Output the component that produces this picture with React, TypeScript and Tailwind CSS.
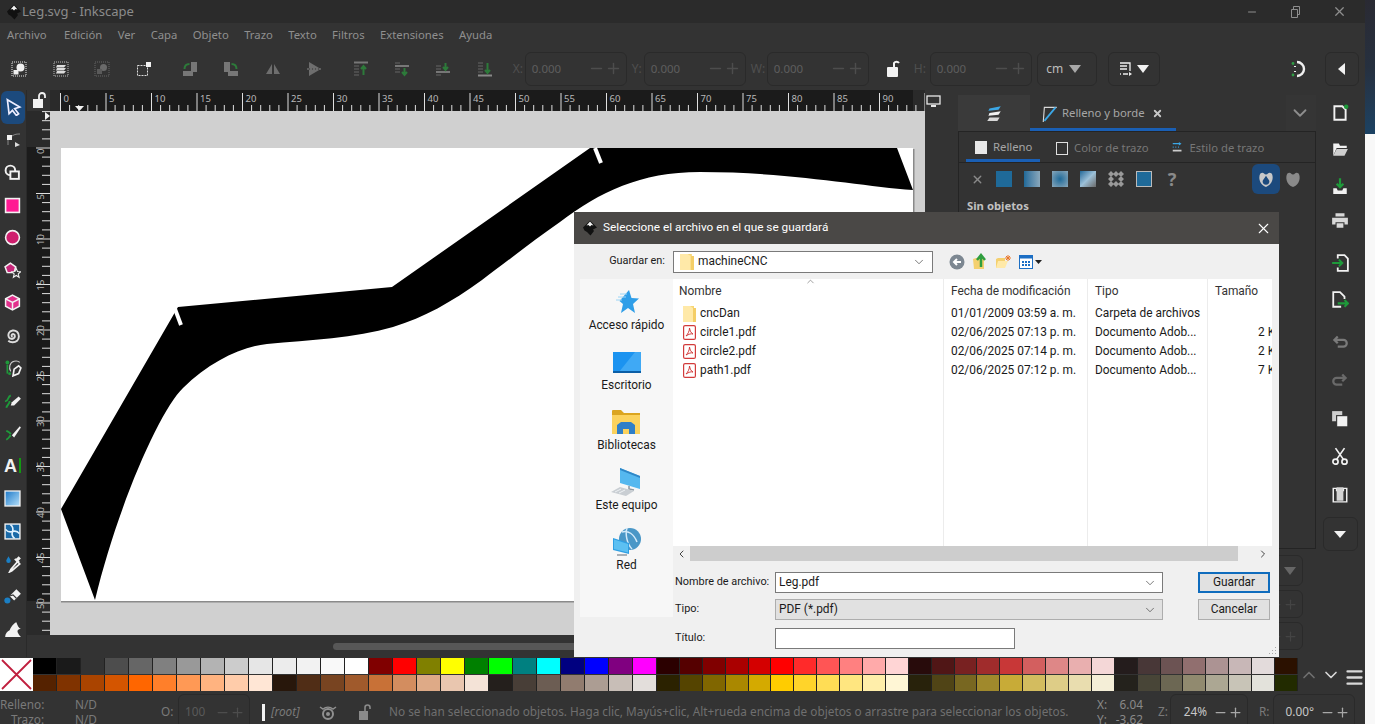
import React from "react"
import { ChevronDown, ChevronUp, ChevronLeft, ChevronRight, Minus, Plus, X, Menu } from "lucide-react"

const row1 = ["#000000","#1a1a1a","#333333","#4d4d4d","#666666","#808080","#999999","#b3b3b3","#cccccc","#e6e6e6","#ececec","#f2f2f2","#f9f9f9","#ffffff","#800000","#ff0000","#808000","#ffff00","#008000","#00ff00","#008080","#00ffff","#000080","#0000ff","#800080","#ff00ff","#2b0000","#550000","#800000","#aa0000","#d40000","#ff0000","#ff2a2a","#ff5555","#ff8080","#ffaaaa","#ffd5d5","#280b0b","#501616","#782121","#a02c2c","#c83737","#d35f5f","#de8787","#e9afaf","#f4d7d7","#241c1c","#483737","#6c5353","#916f6f","#ac9393","#c8b7b7","#e3dbdb","#2b1100"]
const row2 = ["#552200","#803300","#aa4400","#d45500","#ff6600","#ff7f2a","#ff9955","#ffb380","#ffccaa","#ffe6d5","#28170b","#502d16","#784421","#a05a2c","#c87137","#d38d5f","#deaa87","#e9c6af","#f4e3d7","#241f1c","#483e37","#6c5d53","#917c6f","#ac9d93","#c8beb7","#e3dedb","#2b2200","#554400","#806600","#aa8800","#d4aa00","#ffcc00","#ffd42a","#ffdd55","#ffe680","#ffeeaa","#fff6d5","#28220b","#504416","#786721","#a0892c","#c8ab37","#d3bc5f","#decd87","#e9ddaf","#f4eed7","#24221c","#484537","#6c6753","#918a6f","#aca793","#c8c4b7","#e3e2db","#222b00"]

const ui = "font-['Noto_Sans',sans-serif]"
const win = "font-['Roboto',sans-serif]"

function I({ s = 16, children }: { s?: number; children: React.ReactNode }) {
  return <svg width={s} height={s} viewBox="0 0 16 16" className="shrink-0">{children}</svg>
}

function Spin({ w, value }: { w: string; value: string }) {
  return (
    <div className={`flex h-[34px] shrink-0 items-center rounded-md border border-[#2a2a2a] ${w}`}>
      <span className="flex-1 pl-1.5 text-[11.500px] text-[#5e5e5e]">{value}</span>
      <Minus size={17} className="text-[#4d4d4d]" />
      <Plus size={17} className="mr-1 text-[#4d4d4d]" />
    </div>
  )
}

function Logo({ s = 16 }: { s?: number }) {
  return (
    <I s={s}>
      <path d="M8 0.5 15 7.500 11 9.500 12 11 8.500 15.500 5 12 2.500 10.500 1 7.500Z" fill="#111" />
      <path d="M8 1.500 11.500 5.500 9.500 5 8 6.500 6.500 5 4.500 5.500Z" fill="#f2f2f2" />
    </I>
  )
}

function TitleBar() {
  return (
    <div className="flex h-[23px] items-center bg-[#2b2b2b]">
      <div className="ml-[6px]"><Logo /></div>
      <span className="text-[13px] text-[#8b8b8b]">Leg.svg - Inkscape</span>
      <div className="ml-auto flex items-center text-[#8e8e8e]">
        <Minus size={12} className="mr-[32px]" />
        <svg width="11" height="12" viewBox="0 0 11 12" className="mr-[31px]" fill="none" stroke="currentColor">
          <path d="M1.500 3.500h6v8h-6zM3.500 3.500v-3h6v8h-2" />
        </svg>
        <X size={15} className="mr-[18px]" />
      </div>
    </div>
  )
}

function MenuBar() {
  const items = ["Archivo", "Edición", "Ver", "Capa", "Objeto", "Trazo", "Texto", "Filtros", "Extensiones", "Ayuda"]
  return (
    <div className="flex h-[24px] items-center gap-[15.400px] bg-[#333333] pl-[7px] pt-[1px] text-[11.300px] text-[#8f8f8f]">
      {items.map((t, i) => <span key={t} className={i === 0 ? "mr-[2px]" : ""}>{t}</span>)}
    </div>
  )
}

function TopIcons() {
  const dotted = "#e8e8e8"
  return (
    <>
      <div className="flex w-[173px] shrink-0 items-center gap-[25.500px] pl-[11px]">
        <I><rect x="1" y="1" width="14" height="14" fill="none" stroke={dotted} strokeDasharray="1 1" /><circle cx="9.500" cy="6.500" r="4" fill="#f0f0f0" /><rect x="2.500" y="9" width="5" height="4.500" fill="#f0f0f0" /></I>
        <I><rect x="1" y="1" width="14" height="14" fill="none" stroke="#bbb" strokeDasharray="1 1" /><path d="M4 4h9l-2 2.500H3zM4 7h9l-2 2.500H3zM4 10h9l-2 2.500H3z" fill="#ddd" /></I>
        <I><rect x="1" y="1" width="14" height="14" fill="none" stroke="#666" strokeDasharray="1 1" /><circle cx="9.500" cy="6.500" r="3.500" fill="#6a6a6a" /><rect x="3" y="8" width="5" height="5" fill="#5a5a5a" /></I>
        <I><rect x="1.500" y="4.500" width="10" height="10" fill="none" stroke="#ddd" strokeDasharray="2 1" /><rect x="10" y="1" width="5" height="5" fill="#f2f2f2" /></I>
      </div>
      <div className="flex shrink-0 items-center gap-[25.300px] pl-[9px]">
        <I><rect x="9" y="1" width="6" height="10" fill="#777" /><rect x="1" y="10" width="10" height="5" fill="#777" /><path d="M2.500 8c0-3 2-5 5-5" fill="none" stroke="#2d7a3a" strokeWidth="2" /></I>
        <I><rect x="1" y="1" width="6" height="10" fill="#777" /><rect x="5" y="10" width="10" height="5" fill="#777" /><path d="M13.500 8c0-3-2-5-5-5" fill="none" stroke="#2d7a3a" strokeWidth="2" /></I>
        <I><path d="M1 13 7 3v10zM15 13 9 3v10z" fill="#6e6e6e" /></I>
        <I><path d="M3 1v6.500h11zM3 15V8.500h11z" fill="#6e6e6e" /><path d="M1 8h14" stroke="#888" strokeDasharray="2 1" /></I>
      </div>
      <div className="flex shrink-0 items-center gap-[25.300px] pl-[31px]">
        <I><path d="M1 1.500h14" stroke="#777" strokeWidth="2" /><path d="M1 5h5M1 8h5M1 11h5M1 14h5" stroke="#666" /><path d="M10.500 14V5M8 8l2.500-3L13 8" stroke="#2d7a3a" fill="none" strokeWidth="2" /></I>
        <I><path d="M1 5h14" stroke="#777" strokeWidth="2" /><path d="M1 2h5M1 8h5M1 11h5" stroke="#666" /><path d="M10.500 14V7M8 11l2.500 3 2.500-3" stroke="#2d7a3a" fill="none" strokeWidth="2" /></I>
        <I><path d="M1 11h14" stroke="#777" strokeWidth="2" /><path d="M1 5h5M1 8h5M1 14h5" stroke="#666" /><path d="M10.500 2v7M8 6l2.500 3L13 6" stroke="#2d7a3a" fill="none" strokeWidth="2" /></I>
        <I><path d="M1 14.500h14" stroke="#888" strokeWidth="2" /><path d="M1 2h5M1 5h5M1 8h5M1 11h5" stroke="#666" /><path d="M10.500 2v10M8 9l2.500 3L13 9" stroke="#2d7a3a" fill="none" strokeWidth="2" /></I>
      </div>
    </>
  )
}

function ToolBar() {
  return (
    <div className="flex h-[43px] items-center bg-[#333333] text-xs">
      <TopIcons />
      <span className="ml-[20px] w-[12px] shrink-0 text-[#4f4f4f]">X:</span>
      <Spin w="w-[102px]" value="0.000" />
      <span className="ml-[5px] w-[12px] shrink-0 text-[#4f4f4f]">Y:</span>
      <Spin w="w-[102px]" value="0.000" />
      <span className="ml-[5px] w-[16px] shrink-0 text-[#4f4f4f]">W:</span>
      <Spin w="w-[102px]" value="0.000" />
      <svg width="14" height="20" viewBox="0 0 14 20" className="ml-[17px] shrink-0">
        <rect x="1" y="8" width="11" height="10" rx="1" fill="#f2f2f2" />
        <path d="M8 8V4a3 3 0 0 1 5 0" fill="none" stroke="#f2f2f2" strokeWidth="2" />
      </svg>
      <span className="ml-[14px] w-[16px] shrink-0 text-[#4f4f4f]">H:</span>
      <Spin w="w-[102px]" value="0.000" />
      <div className="ml-[5px] flex h-[34px] w-[60px] shrink-0 items-center justify-center gap-[6px] rounded-md border border-[#2a2a2a] pr-[6px] text-[#bdbdbd]">
        cm
        <svg width="12" height="8" viewBox="0 0 12 8"><path d="M0 0h12L6 8z" fill="#a8a8a8" /></svg>
      </div>
      <div className="ml-[11px] flex h-[34px] w-[52px] shrink-0 items-center justify-center gap-[3px] rounded-md border border-[#2a2a2a]">
        <I><path d="M2 2h10v8M2 5h7M2 8h7" stroke="#eee" fill="none" strokeWidth="1.300" /><path d="M2 13h1M5 13h5" stroke="#eee" strokeWidth="1.300" /><path d="m11 11 3 2-3 2z" fill="#eee" /></I>
        <svg width="12" height="8" viewBox="0 0 12 8"><path d="M0 0h12L6 8z" fill="#f2f2f2" /></svg>
      </div>
      <svg width="18" height="18" viewBox="0 0 18 18" className="ml-[129px] shrink-0">
        <path d="M8 2a7 7 0 1 1 0 14" fill="none" stroke="#f0f0f0" strokeWidth="2.400" />
        <path d="M6 6v1M6 11v1" stroke="#f0f0f0" strokeWidth="2" />
        <circle cx="4" cy="3.500" r="1.400" fill="#2f9e44" /><circle cx="4" cy="15" r="1.400" fill="#2f9e44" />
      </svg>
      <div className="ml-[18px] flex h-[34px] w-[34px] shrink-0 items-center justify-center rounded-md border border-[#2a2a2a]">
        <svg width="7" height="12" viewBox="0 0 7 12"><path d="M7 0v12L0 6z" fill="#f2f2f2" /></svg>
      </div>
    </div>
  )
}

const white = "#f2f2f2"
const tools: React.ReactNode[] = [
  <I s={18} key="sel"><path d="M3 1.500 14 8l-4.500 1.500L13 14l-2 1.500-3.500-4.500L4.500 14z" fill="#1c4a7d" stroke="#eef" strokeWidth="1.500" /></I>,
  <I s={16} key="node"><rect x="2" y="3" width="5" height="5" fill={white} /><path d="M7 4c3-2 5-2 8-2" stroke="#888" fill="none" /><path d="M3 8v5" stroke="#888" /><path d="m10 10 5 3-5 2z" fill="#ddd" /></I>,
  <I s={17} key="build"><circle cx="6" cy="6" r="4.500" fill="none" stroke={white} strokeWidth="1.800" /><rect x="6" y="7" width="8" height="7" fill="#333" stroke={white} strokeWidth="1.800" /></I>,
  <I s={17} key="rect"><rect x="1.500" y="1.500" width="13" height="13" fill="#ff1a93" stroke={white} strokeWidth="1.500" /></I>,
  <I s={17} key="circ"><circle cx="8" cy="8" r="6.500" fill="#cf1f6e" stroke={white} strokeWidth="1.500" /></I>,
  <I s={17} key="star"><path d="M6 1 11 4.500 9.500 10H3L1 4.500z" fill="#c7277a" stroke={white} strokeWidth="1.400" /><path d="m11.500 6 1.200 3 3 .2-2.300 2 .8 3.200-2.700-1.700-2.700 1.700.8-3.200-2.300-2 3-.2z" fill="#333" stroke={white} /></I>,
  <I s={17} key="box"><path d="M8 1 14.500 4.500v7L8 15l-6.500-3.500v-7z" fill="#e2308c" stroke={white} strokeWidth="1.400" /><path d="M1.500 4.500 8 8l6.500-3.500M8 8v7" fill="none" stroke={white} strokeWidth="1.400" /></I>,
  <I s={17} key="spiral"><path d="M8 9.500a1.500 1.500 0 1 1 2-2c.8 2-1 4-3 3.700C4.500 11 3.500 8 4.500 5.800 6 3 10 2.500 12.300 4.500c2.500 2.300 2 6.500 0 8.500-2 1.700-6 2-8.300 0" fill="none" stroke="#dcdcdc" strokeWidth="1.800" /></I>,
  <I s={18} key="pen"><path d="M6 11c-2-3-1-8 3-9 2-.5 4 0 5 1" fill="none" stroke="#ccc" /><path d="m8 15 1-6 4-3 2 2-2 5z" fill="#333" stroke={white} strokeWidth="1.500" /><circle cx="3" cy="3" r="1.700" fill="#1e9a3a" /><path d="M3 5v8" stroke="#1e9a3a" strokeWidth="1.500" /><circle cx="5" cy="13" r="1.300" fill="#1e9a3a" /></I>,
  <I s={18} key="pencil"><path d="m6 12 1-3 6-5 2 2-6 6z" fill={white} /><path d="M1 8c3 1 2-4 5-5M2 14c1-3 3-3 3-6" stroke="#1e9a3a" fill="none" strokeWidth="1.700" /></I>,
  <I s={18} key="cal"><path d="m7 10 7-8 1 1-6 9z" fill={white} /><path d="M2 6c2 1 3 1 4 3M2 14c2-1 3-3 4-4" stroke="#1e9a3a" fill="none" strokeWidth="1.700" /></I>,
  <div key="text" className="flex items-center gap-[2px]"><span className="font-['Liberation_Sans',sans-serif] text-[18px] font-bold leading-none text-[#f2f2f2]">A</span><div className="h-[15px] w-[2px] bg-[#119911]" /></div>,
  <svg key="grad" width="17" height="17" viewBox="0 0 17 17"><defs><linearGradient id="g1" x1="0" y1="0" x2="1" y2="1"><stop offset="0" stopColor="#1c78c8" /><stop offset="1" stopColor="#b8e2fb" /></linearGradient></defs><rect x="1" y="1" width="15" height="15" fill="url(#g1)" stroke={white} strokeWidth="1.300" /></svg>,
  <I s={17} key="mesh"><rect x="1" y="1" width="14" height="14" fill="#1a6aa8" stroke={white} strokeWidth="1.300" /><path d="M8 8C5 9 3 8 1.500 6M8 8c1-3 0-5-2-6.500M8 8c3-1 5 0 6.500 2M8 8c-1 3 0 5 2 6.500" stroke="#e0f2ff" fill="none" strokeWidth="1.500" /></I>,
  <I s={18} key="drop"><path d="m6 13 6-7 2 2-7 6-2 1z" fill="#333" stroke={white} strokeWidth="1.500" /><path d="m11 3 2-2 2 2-2 2 1 1-1.500 1.500L9 4l1-1z" fill={white} /><path d="M4 1c1 2 2 3 2 4a2 2 0 0 1-4 0c0-1 1-2 2-4z" fill="#1b7fc4" /></I>,
  <I s={18} key="bucket"><path d="m5 8 6-6 4 4-6 6z" fill={white} /><circle cx="3" cy="12" r="2.700" fill="#1b7fc4" /><path d="m5 8 3-1 3 3" fill="none" stroke="#333" /></I>,
  <I s={18} key="eraser"><path d="M1 15c0-3 2-5 4-6 1-2 3-6 6-7 1 3 2 5 4 6 0 0-3 0-3 2s3 5 3 5z" fill={white} /></I>,
]

function ToolColumn() {
  return (
    <div className="flex w-[27px] shrink-0 flex-col items-center border-r border-[#2a2a2a] bg-[#333333] pr-[1px] pt-[1px]">
      {tools.map((t, i) => (
        <div key={i} className={`flex h-[32.600px] w-[24px] shrink-0 items-center justify-center ${i === 0 ? "rounded-md bg-[#1c4a7d]" : ""}`}>{t}</div>
      ))}
    </div>
  )
}

function TopRuler() {
  const ticks = []
  for (let i = 0; i <= 95; i++) {
    const x = 10.500 + i * 9.100
    ticks.push(<line key={i} x1={x} x2={x} y1={i % 5 === 0 ? 3 : 15} y2={21} stroke="#e0e0e0" strokeWidth="1" />)
    if (i % 5 === 0 && i < 95) ticks.push(<text key={`t${i}`} x={x + 3} y={12} fontSize="9.500" fill="#b8b8b8" fontFamily="Noto Sans">{i}</text>)
  }
  return (
    <svg width="875" height="21" viewBox="0 0 875 21" className="shrink-0 bg-[#2a2a2a]">
      <rect x="10" y="0" width="853" height="21" fill="#1b1b1b" />
      {ticks}
      <path d="M25 16h9l-4.500 5z" fill="#f2f2f2" />
    </svg>
  )
}

function LeftRuler() {
  const ticks = []
  for (let i = -4; i <= 54; i++) {
    const y = 37 + i * 9.100
    ticks.push(<line key={i} y1={y} y2={y} x1={i % 5 === 0 ? 9 : 15} x2={23} stroke="#e0e0e0" strokeWidth="1" />)
    if (i % 5 === 0 && i >= 0 && i <= 50) ticks.push(<text key={`t${i}`} transform={`translate(17 ${y + 6}) rotate(-90)`} fontSize="9.500" fill="#b8b8b8" fontFamily="Noto Sans">{i}</text>)
  }
  return (
    <svg width="23" height="524" viewBox="0 0 23 524" className="shrink-0 bg-[#2a2a2a]">
      <rect x="0" y="36" width="23" height="454" fill="#1b1b1b" />
      {ticks}
      <path d="M18 1v8l5-4z" fill="#f2f2f2" />
    </svg>
  )
}

function Drawing() {
  return (
    <svg width="875" height="524" viewBox="50 111 875 524" className="shrink-0 bg-[#d0d0d0]">
      <rect x="61" y="149" width="853.500" height="453.500" fill="#8a8a8a" />
      <rect x="61" y="148" width="852" height="453" fill="#fff" />
      <path d="M61 509 178 307 392 287 590 148H897L913 190C860 186 790 172 700 172 640 172 600 192 560 222 530 243 505 263 482 280 450 303 425 317 393 327 355 338 310 340 267 344 240 347 210 362 183 388 160 410 118 505 95 600Z" fill="#000" />
      <path d="M175 309 181 325" stroke="#fff" strokeWidth="4" />
      <path d="M595 148 601 163" stroke="#fff" strokeWidth="4" />
    </svg>
  )
}

function Center() {
  return (
    <div className="flex w-[918px] shrink-0 flex-col bg-[#333333]">
      <div className="flex h-[21px] shrink-0">
        <div className="flex w-[23px] items-center justify-start bg-[#333333]">
          <svg width="14" height="17" viewBox="0 0 14 17" className="ml-[6px]"><rect x="0" y="7" width="10" height="9" fill="#f2f2f2" /><path d="M6 7V4a3 3 0 0 1 6 0v2" fill="none" stroke="#f2f2f2" strokeWidth="1.800" /></svg>
        </div>
        <TopRuler />
        <div className="flex flex-1 justify-start pl-[1px] pt-[5px]">
          <svg width="15" height="13" viewBox="0 0 15 13"><rect x="1" y="1" width="13" height="8" fill="none" stroke="#e8e8e8" strokeWidth="1.300" /><path d="M5 11h5" stroke="#e8e8e8" strokeWidth="2" /></svg>
        </div>
      </div>
      <div className="flex h-[524px] shrink-0">
        <LeftRuler />
        <Drawing />
      </div>
      <div className="flex flex-1 items-center pl-[306px]">
        <div className="h-[7px] w-[300px] rounded-full bg-[#575757]" />
      </div>
    </div>
  )
}

function Panel() {
  return (
    <div className="flex w-[371px] shrink-0 flex-col bg-[#333333] pl-[13px] pt-[5px]">
      <div className="flex h-[36px] w-[358px] shrink-0 items-stretch bg-[#333333]">
        <div className="flex w-[72px] items-center justify-center bg-[#3a3a3a]">
          <I s={18}><path d="M4 4 14 2l-2 3-9 1z" fill="#3ba7e6" /><path d="M4 8 14 6.500l-2 3-9 1z" fill="#f2f2f2" /><path d="M4 12h9l-2 3H2z" fill="#d8d8d8" /></I>
        </div>
        <div className="flex w-[146px] items-center border-b-[3px] border-[#1a5fb4] pl-[11px] pt-[3px] text-[11.300px] text-[#a6a6a6]">
          <I s={18}><path d="M2 16 3 3h11" fill="none" stroke="#d8d8d8" /><path d="M3 15 13 3" stroke="#3ba7e6" strokeWidth="1.600" /></I>
          <span className="ml-[3px]">Relleno y borde</span>
          <X size={11} strokeWidth={4} className="ml-[7px] text-[#c8c8c8]" />
        </div>
        <div className="ml-auto flex w-[30px] items-center justify-center bg-[#353535] pr-[3px]"><ChevronDown size={22} className="text-[#8d8d8d]" /></div>
      </div>
      <div className="flex h-[418px] w-[358px] shrink-0 flex-col border border-[#242424] bg-[#333333]">
        <div className="flex h-[31px] shrink-0 items-end border-b border-[#242424] text-[11.300px] text-[#777777]">
          <div className="ml-[7px] flex h-[31px] w-[74px] items-center border-b-[3px] border-[#1a5fb4] pl-[9px] pt-[4px] text-[#a6a6a6]">
            <div className="mr-[6px] h-[13px] w-[12px] bg-[#e8e8e8]" />Relleno
          </div>
          <div className="ml-[16px] flex h-[31px] items-center pt-[3px]">
            <div className="mr-[6px] h-[13px] w-[12px] border border-[#e0e0e0]" />Color de trazo
          </div>
          <div className="ml-[22px] flex h-[31px] items-center pt-[3px]">
            <I s={14}><path d="M2 3h8M2 7h1M5 7h1M8 7h1" stroke="#3ba7e6" strokeWidth="1.500" /><path d="m9 1 3 2-3 2z" fill="#3ba7e6" /><path d="M2 11h10" stroke="#ccc" strokeWidth="2" /></I>
            <span className="ml-[5px]">Estilo de trazo</span>
          </div>
        </div>
        <div className="flex h-[32px] shrink-0 items-center pl-[12px]">
          <X size={13} strokeWidth={2.500} className="text-[#8a8a8a]" />
          <div className="ml-[12px] h-[16px] w-[16px] bg-[#1f6a99]" />
          <div className="ml-[12px] h-[16px] w-[16px] bg-gradient-to-r from-[#1f6a99] to-[#8aa8bb]" />
          <div className="ml-[12px] h-[16px] w-[16px] bg-[radial-gradient(circle,#1f6a99,#8aa8bb)]" />
          <div className="ml-[12px] h-[16px] w-[16px] bg-gradient-to-br from-[#1f6a99] via-[#9cc0d8] to-[#6a6a6a]" />
          <svg width="16" height="16" viewBox="0 0 16 16" className="ml-[12px]"><path d="M3 0l3 3-3 3-3-3zM8 0l3 3-3 3-3-3zM13 0l3 3-3 3-3-3zM3 5l3 3-3 3-3-3zM13 5l3 3-3 3-3-3zM3 10l3 3-3 3-3-3zM8 10l3 3-3 3-3-3zM13 10l3 3-3 3-3-3z" fill="#999" /></svg>
          <div className="ml-[12px] h-[16px] w-[16px] border border-[#bbb] bg-[#1f6a99]" />
          <span className="ml-[12px] w-[16px] text-center text-lg font-bold leading-none text-[#8a8a8a]">?</span>
          <div className="ml-[72px] flex h-[30px] w-[28px] items-center justify-center rounded-md bg-[#1c4a7d]">
            <I s={18}><path d="M3 3c3-1.500 3 1 5 1s2-2.500 5-1c2 3 1 10-5 12C2 13 1 6 3 3z" fill="#c8c8c8" /><path d="M8 5c2 3 3 4 3 5a3 3 0 0 1-6 0c0-1 1-2 3-5z" fill="#1c4a7d" /></I>
          </div>
          <div className="ml-[4px]"><I s={18}><path d="M3 3c3-1.500 3 1 5 1s2-2.500 5-1c2 3 1 10-5 12C2 13 1 6 3 3z" fill="#8a8a8a" /></I></div>
        </div>
        <div className="pl-[8px] pt-[3px] text-[11.300px] font-bold text-[#c0c0c0]">Sin objetos</div>
      </div>
      <div className="flex flex-1 flex-col items-end gap-[4px] pr-[13px] pt-[6px]">
        <div className="flex h-[31px] w-[50px] items-center justify-end rounded-md border border-[#2a2a2a] pr-[6px]">
          <svg width="12" height="8" viewBox="0 0 12 8"><path d="M0 0h12L6 8z" fill="#666" /></svg>
        </div>
        <div className="flex h-[28px] w-[50px] items-center justify-end rounded-md border border-[#2a2a2a]">
          <Minus size={15} className="text-[#444]" /><Plus size={15} className="mr-1 text-[#444]" />
        </div>
        <div className="flex h-[28px] w-[50px] items-center justify-end rounded-md border border-[#2a2a2a]">
          <Minus size={15} className="text-[#444]" /><Plus size={15} className="mr-1 text-[#444]" />
        </div>
      </div>
    </div>
  )
}

// icon and the gap above it, gaps read off the reference
const sideIcons: [React.ReactNode, string][] = [
  [<I s={18} key="n"><path d="M3 2h7l3 3v9H3z" fill="none" stroke={white} strokeWidth="1.700" /><circle cx="13.500" cy="2.500" r="2" fill="#1e9a3a" /></I>, "mt-[13px]"],
  [<I s={18} key="o"><path d="M2 3h5l1 2h6v2H5l-3 7z" fill={white} /><path d="M5 8h10l-3 6H2z" fill="#cfcfcf" /></I>, "mt-[16px]"],
  [<I s={18} key="s"><path d="M2 10h3l1 2h4l1-2h3v5H2z" fill={white} /><path d="M8 1v7M5 6l3 3 3-3" stroke="#1e9a3a" strokeWidth="2" fill="none" /></I>, "mt-[17px]"],
  [<I s={18} key="p"><path d="M4 1h8v3H4zM1 5h14v6H12v-2H4v2H1zM5 10h6v4H5z" fill="#d8d8d8" /></I>, "mt-[15px]"],
  [<I s={18} key="i"><path d="M6 4V1h6l3 3v11H6v-3" fill="none" stroke={white} strokeWidth="1.600" /><path d="M1 8h8M7 5l3 3-3 3" stroke="#1e9a3a" strokeWidth="1.800" fill="none" /></I>, "mt-[22px]"],
  [<I s={18} key="e"><path d="M9 14H2V1h6l4 4v2" fill="none" stroke={white} strokeWidth="1.600" /><path d="M6 11h8M12 8l3 3-3 3" stroke="#1e9a3a" strokeWidth="1.800" fill="none" /></I>, "mt-[17px]"],
  [<I s={18} key="u"><path d="M4 7h7a3 3 0 0 1 0 6H6M6 4 3 7l3 3" stroke="#7a7a7a" strokeWidth="2" fill="none" /></I>, "mt-[21px]"],
  [<I s={18} key="r"><path d="M12 7H5a3 3 0 0 0 0 6h5M10 4l3 3-3 3" stroke="#6a6a6a" strokeWidth="2" fill="none" /></I>, "mt-[18px]"],
  [<I s={18} key="c"><rect x="1" y="1" width="9" height="9" fill="#cfcfcf" /><rect x="5" y="5" width="10" height="10" fill={white} stroke="#333" /></I>, "mt-[20px]"],
  [<I s={18} key="x"><circle cx="4" cy="13" r="2.300" fill="none" stroke={white} strokeWidth="1.500" /><circle cx="12" cy="13" r="2.300" fill="none" stroke={white} strokeWidth="1.500" /><path d="M5 11 12 1M11 11 4 1" stroke={white} strokeWidth="1.500" /></I>, "mt-[17px]"],
  [<I s={18} key="v"><path d="M2 3h3v2h6V3h3v12H2z" fill="none" stroke={white} strokeWidth="1.300" /><rect x="5" y="2" width="6" height="12" fill="#d4d4d4" /></I>, "mt-[18px]"],
]

function RightBar() {
  return (
    <div className="flex w-[49px] shrink-0 flex-col items-center bg-[#333333] pr-[1px]">
      {sideIcons.map(([icon, m], i) => (
        <div key={i} className={`flex h-[20px] w-full shrink-0 items-center justify-center ${m}`}>{icon}</div>
      ))}
      <div className="mt-[13px] flex h-[34px] w-[35px] items-center justify-center rounded-md border border-[#2a2a2a]">
        <svg width="12" height="7" viewBox="0 0 12 7"><path d="M0 0h12L6 7z" fill="#f2f2f2" /></svg>
      </div>
    </div>
  )
}

function Palette() {
  return (
    <div className="flex h-[35px] items-center bg-[#333333]">
      <svg width="33" height="33" viewBox="0 0 33 33" className="shrink-0 bg-white">
        <path d="M2 2 31 31M31 2 2 31" stroke="#c01f3e" strokeWidth="1.800" />
      </svg>
      <div className="flex w-[1265px] shrink-0 flex-col gap-px overflow-hidden">
        {[row1, row2].map((r, n) => (
          <div key={n} className="flex h-[16px]">
            {r.map((c, i) => <div key={i} className={`shrink-0 border-r border-[#222222] ${i < 26 ? "w-[24px]" : "w-[22.900px]"}`} style={{ background: c }} />)}
          </div>
        ))}
      </div>
      <ChevronUp size={20} className="ml-[1px] shrink-0 text-[#6f6f6f]" />
      <ChevronDown size={20} className="ml-[2px] shrink-0 text-[#d8d8d8]" />
      <Menu size={21} strokeWidth={2.600} className="ml-[3px] mt-[6px] shrink-0 text-[#d8d8d8]" />
    </div>
  )
}

function StatusBar() {
  return (
    <div className="h-[32px] overflow-hidden bg-[#333333] text-[11.800px] text-[#7a7a7a]">
      <div className="flex h-[38px] items-center pt-[2px]">
        <div className="grid w-[118px] shrink-0 grid-cols-[75px_1fr] leading-[15px]">
          <span>Relleno:</span><span>N/D</span>
          <span className="pl-[11px]">Trazo:</span><span>N/D</span>
        </div>
        <span className="ml-[43px] w-[17px] shrink-0">O:</span>
        <div className="flex h-[36px] w-[72px] shrink-0 items-center rounded-md border border-[#2a2a2a]">
          <span className="flex-1 pl-[6px] text-[#5a5a5a]">100</span>
          <Minus size={15} className="text-[#4d4d4d]" /><Plus size={15} className="mr-1 text-[#4d4d4d]" />
        </div>
        <div className="ml-[12px] h-[17px] w-[3px] shrink-0 bg-[#f2f2f2]" />
        <span className="ml-[6px] w-[29px] shrink-0 italic">[root]</span>
        <svg width="18" height="15" viewBox="0 0 18 15" className="ml-[19px] shrink-0"><path d="M1 2l3 2a8 8 0 0 1 10 0l3-2" stroke="#909090" fill="none" strokeWidth="1.500" /><circle cx="9" cy="9" r="5" fill="none" stroke="#909090" strokeWidth="2" /><circle cx="9" cy="9" r="2" fill="#909090" /></svg>
        <svg width="12" height="16" viewBox="0 0 12 16" className="ml-[22px] shrink-0"><rect x="0" y="7" width="9" height="9" fill="#8a8a8a" /><path d="M6 7V3.500a2.500 2.500 0 0 1 5 0V5" fill="none" stroke="#8a8a8a" strokeWidth="1.600" /></svg>
        <span className="ml-[18px] w-[708px] shrink-0 whitespace-nowrap text-[#6f6f6f]">No se han seleccionado objetos. Haga clic, Mayús+clic, Alt+rueda encima de objetos o arrastre para seleccionar los objetos.</span>
        <div className="grid w-[61px] shrink-0 grid-cols-[18px_28px] leading-[15px] text-[#8a8a8a]">
          <span>X:</span><span className="text-right">6.04</span>
          <span>Y:</span><span className="text-right">-3.62</span>
        </div>
        <span className="w-[12px] shrink-0">Z:</span>
        <div className="flex h-[36px] w-[78px] shrink-0 items-center justify-end rounded-md border border-[#2a2a2a] text-[#c8c8c8]">
          <span className="mr-[6px]">24%</span><Minus size={15} className="text-[#a8a8a8]" /><Plus size={15} className="mr-1 text-[#a8a8a8]" />
        </div>
        <span className="ml-[11px] w-[14px] shrink-0">R:</span>
        <div className="flex h-[36px] w-[82px] shrink-0 items-center justify-end rounded-md border border-[#2a2a2a] text-[#c8c8c8]">
          <span className="mr-[6px]">0.00°</span><Minus size={15} className="text-[#a8a8a8]" /><Plus size={15} className="mr-1 text-[#a8a8a8]" />
        </div>
      </div>
    </div>
  )
}

function Folder({ w = 13, h = 16 }: { w?: number; h?: number }) {
  return (
    <svg width={w} height={h} viewBox="0 0 13 16" preserveAspectRatio="none" className="shrink-0">
      <path d="M0 0h11v16H0z" fill="#f7d675" />
      <path d="M0 0h7l3 2v14H0z" fill="#ffe9a8" />
      <path d="M10 2h3v14h-3z" fill="#f4ce67" />
    </svg>
  )
}

function Pdf() {
  return (
    <svg width="13" height="15" viewBox="0 0 13 15" className="shrink-0">
      <rect x=".6" y=".6" width="11.800" height="13.800" rx="1.500" fill="#fff" stroke="#d23b3b" strokeWidth="1.200" />
      <path d="M6.500 3c0 3-1.500 6-3.500 8 3-2 5-2.500 7-2-2-1-3-3-3.500-6z" fill="none" stroke="#d23b3b" />
    </svg>
  )
}

const files = [
  { name: "cncDan", date: "01/01/2009 03:59 a. m.", type: "Carpeta de archivos", size: "", folder: true },
  { name: "circle1.pdf", date: "02/06/2025 07:13 p. m.", type: "Documento Adob...", size: "2 KB" },
  { name: "circle2.pdf", date: "02/06/2025 07:14 p. m.", type: "Documento Adob...", size: "2 KB" },
  { name: "path1.pdf", date: "02/06/2025 07:12 p. m.", type: "Documento Adob...", size: "7 KB" },
]

const places: [string, React.ReactNode][] = [
  ["Acceso rápido", <svg key="a" width="26" height="24" viewBox="0 0 26 24"><path d="M16 0l2.500 8 7.500 .5-6 5.500 2 9-7-5-7 5 2-9-3.500-3z" fill="#2f9ee8" /><path d="M7 4h7M5 7h8M3 10h6" stroke="#9ad4f6" /></svg>],
  ["Escritorio", <svg key="e" width="28" height="21" viewBox="0 0 28 21"><rect x="0" y="0" width="28" height="20" fill="#1b93f0" /><path d="M6 20 22 0h6v20z" fill="#3fa9f5" /><rect x="0" y="19" width="28" height="2" fill="#0b5ea6" /></svg>],
  ["Bibliotecas", <svg key="b" width="28" height="24" viewBox="0 0 28 24"><path d="M0 1a1 1 0 0 1 1-1h8l3 3h16v21H0z" fill="#dba520" /><path d="M0 5h28v19H0z" fill="#fbd25d" /><path d="M5 24v-9l4-3h10l4 3v9h-6v-5h-6v5z" fill="#2f7fc8" /></svg>],
  ["Este equipo", <svg key="p" width="30" height="28" viewBox="0 0 30 28"><path d="M9 0 29 8v13L9 15z" fill="#55b8ef" /><path d="M9 0 29 8v2L9 2z" fill="#2f87c7" /><path d="M18 18v3l5 1" stroke="#8b98a3" strokeWidth="1.500" fill="none" /><path d="M0 24l9-5 14 4-8 5z" fill="#c9ced3" /><path d="M4 24l6-3M8 25l6-3" stroke="#eef1f3" /></svg>],
  ["Red", <svg key="r" width="28" height="29" viewBox="0 0 28 29"><circle cx="17" cy="11" r="11" fill="#4a97c7" /><path d="M9 4c6-2 12 2 15 10M14 0c-2 6 0 16 5 21" stroke="#d3eafa" strokeWidth="1.500" fill="none" /><path d="M0 10l16 5v11L0 22z" fill="#2f9fe3" /><path d="M1 11.500l14 4.500v8.500L1 21z" fill="#5cc0f2" /><path d="M4 26h10v2H4z" fill="#aab1b8" /></svg>],
]

function Dialog() {
  return (
    <div className={`absolute left-[574px] top-[212px] flex h-[445px] w-[705px] flex-col bg-[#f0f0f0] text-[11.900px] text-[#1a1a1a] ${win}`}>
      <div className="flex h-[32px] shrink-0 items-center bg-[#4a4846] pl-[8px] pr-[7px] text-[11.800px] text-white">
        <Logo s={16} />
        <span className="ml-[5px]">Seleccione el archivo en el que se guardará</span>
        <X size={17} strokeWidth={1.500} className="ml-auto" />
      </div>
      <div className="flex h-[35px] shrink-0 items-center">
        <span className="w-[91px] text-right text-[10.900px]">Guardar en:</span>
        <div className="ml-[8px] flex h-[22px] w-[260px] items-center border border-[#7a7a7a] bg-white pl-[6px] pr-[6px]">
          <Folder w={14} h={16} />
          <span className="ml-[4px]">machineCNC</span>
          <ChevronDown size={14} strokeWidth={1.200} className="ml-auto text-[#444]" />
        </div>
        <svg width="16" height="16" viewBox="0 0 16 16" className="ml-[16px]"><circle cx="8" cy="8" r="7.500" fill="#7c8791" /><path d="M12 8H5M8 5 5 8l3 3" stroke="#fff" strokeWidth="2" fill="none" /></svg>
        <svg width="16" height="17" viewBox="0 0 16 17" className="ml-[7px]"><path d="M1 6l3-1h8v11H2z" fill="#f4d06f" /><path d="M9 14V4M5 7l4-5 4 5" stroke="#2f9e3f" strokeWidth="2.500" fill="none" /></svg>
        <svg width="16" height="16" viewBox="0 0 16 16" className="ml-[7px]"><path d="M1 5l2-1h7v10H1z" fill="#f4d06f" /><path d="M3 7h10l-3 7H1z" fill="#ffe9a8" /><path d="M13 1v6M10 4h6M11 2l4 4M15 2l-4 4" stroke="#e8762a" /></svg>
        <svg width="14" height="14" viewBox="0 0 14 14" className="ml-[8px]"><rect x=".5" y=".5" width="13" height="13" fill="#fff" stroke="#1d6fc4" /><rect x=".5" y=".5" width="13" height="3" fill="#1d6fc4" /><path d="M3 6h2v2H3zM6 6h2v2H6zM9 6h2v2H9zM3 9h2v2H3zM6 9h2v2H6zM9 9h2v2H9z" fill="#1d6fc4" /></svg>
        <svg width="7" height="4" viewBox="0 0 7 4" className="ml-[2px]"><path d="M0 0h7L3.500 4z" fill="#222" /></svg>
      </div>
      <div className="flex flex-1">
        <div className="ml-[6px] flex h-[338px] w-[93px] shrink-0 flex-col items-center bg-[#f7f7f7] pt-[8px]">
          {places.map(([t, ic]) => (
            <div key={t} className="flex h-[60px] shrink-0 flex-col items-center">
              <div className="flex h-[30px] items-center">{ic}</div>
              <span className="whitespace-nowrap">{t}</span>
            </div>
          ))}
        </div>
        <div className="flex w-[599px] shrink-0 flex-col">
          <div className="relative h-[267px] bg-white">
            <ChevronUp size={11} strokeWidth={1.200} className="absolute left-[132px] top-[-3px] text-[#555]" />
            <div className="grid h-full grid-cols-[271px_144px_120px_64px] overflow-hidden">
              {[
                { h: "Nombre", k: "name" },
                { h: "Fecha de modificación", k: "date" },
                { h: "Tipo", k: "type" },
                { h: "Tamaño", k: "size" },
              ].map((c, ci) => (
                <div key={c.h} className={`overflow-hidden ${ci < 3 ? "border-r border-[#ececec]" : ""}`}>
                  <div className={`flex h-[25px] items-center text-[#333] ${ci === 0 ? "pl-[6px]" : "pl-[7px]"}`}>{c.h}</div>
                  {files.map((f) => (
                    <div key={f.name} className={`flex h-[19px] items-center whitespace-nowrap ${ci === 0 ? "pl-[10px]" : ci === 3 ? "pl-[50px]" : "pl-[7px]"}`}>
                      {ci === 0 && (f.folder ? <Folder /> : <Pdf />)}
                      <span className={ci === 0 ? "ml-[4px]" : ""}>{(f as Record<string, unknown>)[c.k] as string}</span>
                    </div>
                  ))}
                </div>
              ))}
            </div>
          </div>
          <div className="flex h-[15px] items-center bg-[#f0f0f0]">
            <ChevronLeft size={12} className="w-[17px] text-[#444]" />
            <div className="h-[15px] w-[548px] bg-[#cdcdcd]" />
            <ChevronRight size={12} className="ml-auto mr-[3px] text-[#444]" />
          </div>
          <div className="mt-[11px] grid grid-cols-[100px_388px_1fr] items-center gap-y-[6px] pl-[2px]">
            <span className="whitespace-nowrap text-[10.900px]">Nombre de archivo:</span>
            <div className="flex h-[21px] items-center border border-[#7a7a7a] bg-white pl-[3px] pr-[5px]">Leg.pdf<ChevronDown size={14} strokeWidth={1.200} className="ml-auto text-[#444]" /></div>
            <div className="ml-[35px] flex h-[21px] w-[72px] items-center justify-center border-2 border-[#0f6cbd] bg-[#e1e1e1]">Guardar</div>
            <span className="text-[10.900px]">Tipo:</span>
            <div className="flex h-[21px] items-center border border-[#adadad] bg-[#e1e1e1] pl-[3px] pr-[5px]">PDF (*.pdf)<ChevronDown size={14} strokeWidth={1.200} className="ml-auto text-[#444]" /></div>
            <div className="ml-[35px] flex h-[21px] w-[72px] items-center justify-center border border-[#adadad] bg-[#e1e1e1]">Cancelar</div>
            <span className="mt-[2px] text-[10.900px]">Título:</span>
            <div className="mt-[2px] h-[21px] w-[240px] border border-[#7a7a7a] bg-white" />
          </div>
        </div>
      </div>
      <svg width="9" height="9" viewBox="0 0 9 9" className="absolute bottom-[2px] right-[2px]"><path d="M7 1h1v1H7zM4 4h1v1H4zM7 4h1v1H7zM1 7h1v1H1zM4 7h1v1H4zM7 7h1v1H7z" fill="#a8a8a8" /></svg>
    </div>
  )
}

export default function App() {
  return (
    <div className={`relative flex h-[724px] w-[1375px] overflow-hidden ${ui}`}>
      <div className="flex w-[1365px] shrink-0 flex-col">
        <TitleBar />
        <MenuBar />
        <ToolBar />
        <div className="flex h-[567px] shrink-0">
          <ToolColumn />
          <Center />
          <Panel />
          <RightBar />
        </div>
        <Palette />
        <StatusBar />
      </div>
      <div className="flex flex-1 flex-col">
        <div className="h-[134px] bg-gradient-to-b from-[#2a2a33] via-[#26303f] to-[#1b4263]" />
        <div className="flex-1 bg-[#f8f8f8]" />
      </div>
      <Dialog />
    </div>
  )
}
